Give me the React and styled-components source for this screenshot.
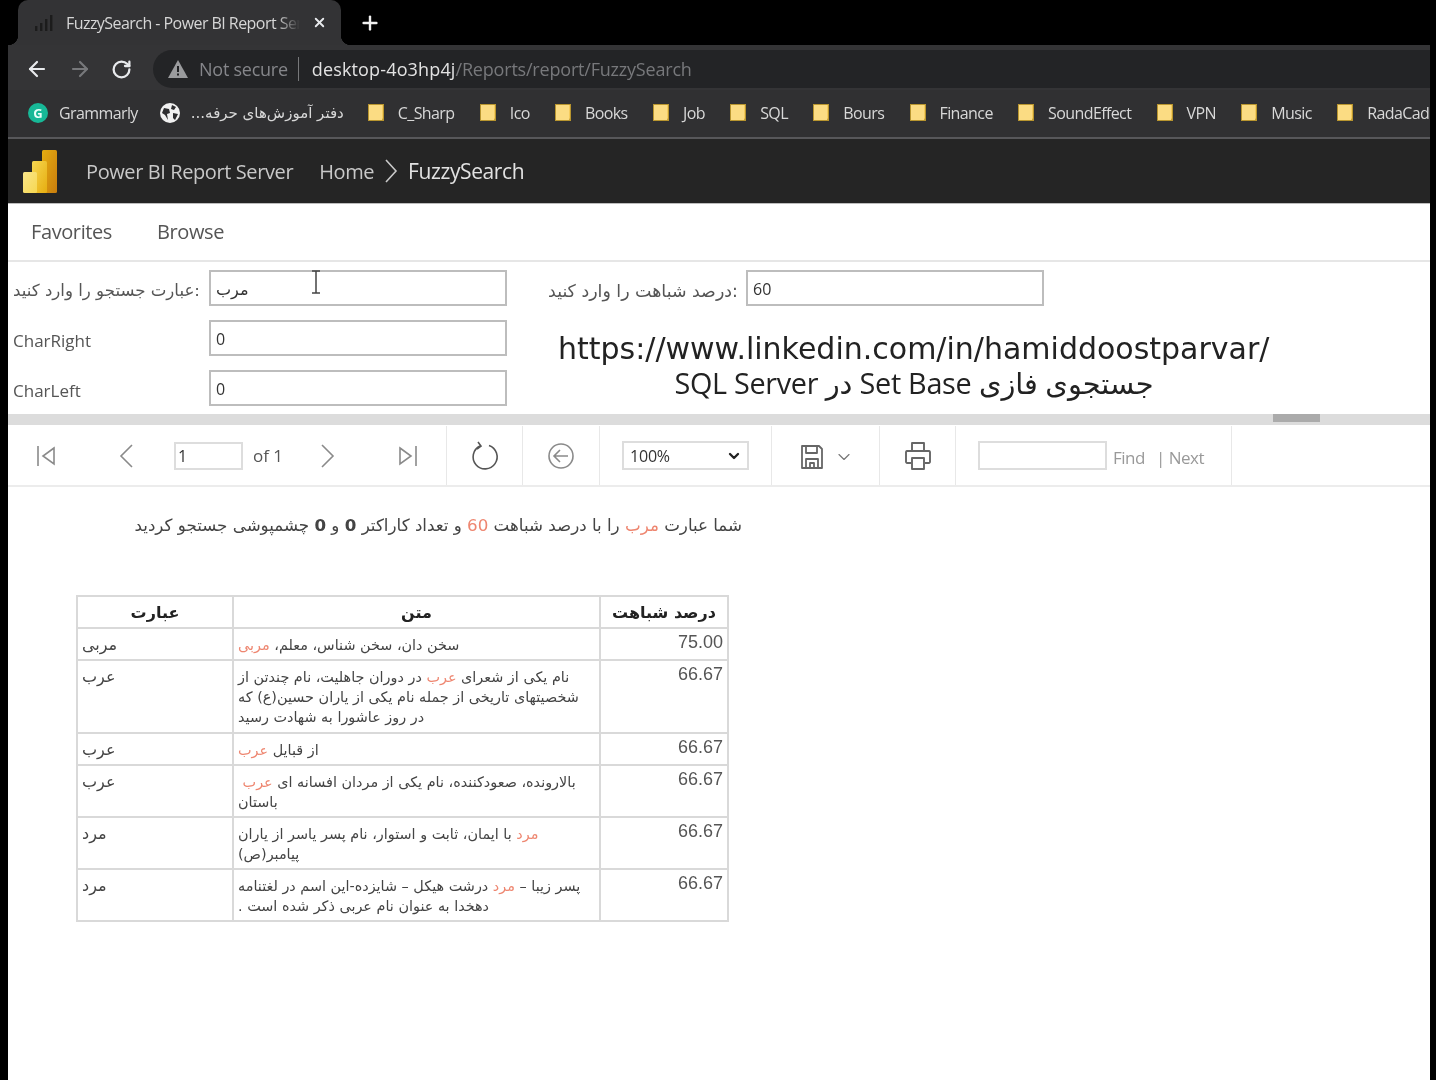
import React from "react";
import styled, { createGlobalStyle } from "styled-components";
import { Plus, X, ArrowLeft, ArrowRight, RotateCw, ChevronDown } from "lucide-react";

const UI_FONT = `"Open Sans", "DejaVu Sans", sans-serif`;
const FA_FONT = `"DejaVu Sans", sans-serif`;

const bookmarks = ["C_Sharp", "Ico", "Books", "Job", "SQL", "Bours", "Finance", "SoundEffect", "VPN", "Music", "RadaCad"];

const rows = [
  { term: "مربی", score: "75.00", h: 32, lines: [["سخن دان، سخن شناس، معلم، ", "مربی"]] },
  {
    term: "عرب",
    score: "66.67",
    h: 73,
    lines: [
      ["نام یکی از شعرای ", "عرب", " در دوران جاهلیت، نام چندتن از"],
      ["شخصیتهای تاریخی از جمله نام یکی از یاران حسین(ع) که"],
      ["در روز عاشورا به شهادت رسید"],
    ],
  },
  { term: "عرب", score: "66.67", h: 32, lines: [["از قبایل ", "عرب"]] },
  {
    term: "عرب",
    score: "66.67",
    h: 52,
    lines: [["بالارونده، صعودکننده، نام یکی از مردان افسانه ای ", "عرب", " "], ["باستان"]],
  },
  {
    term: "مرد",
    score: "66.67",
    h: 52,
    lines: [["", "مرد", " با ایمان، ثابت و استوار، نام پسر یاسر از یاران"], ["پیامبر(ص)"]],
  },
  {
    term: "مرد",
    score: "66.67",
    h: 52,
    lines: [["پسر زیبا – ", "مرد", " درشت هیکل – شایزده-این اسم در لغتنامه"], ["دهخدا به عنوان نام عربی ذکر شده است ."]],
  },
];

const Folder = () => (
  <svg width="17" height="19" viewBox="0 0 17 19">
    <path d="M0 1h16v17H0z" fill="#b8952f" />
    <path d="M1 2h13v15H1z" fill="#fbdc83" />
    <path d="M14 2h1v13l-1 2z" fill="#f5cb5c" />
  </svg>
);

const PowerBiLogo = () => (
  <svg width="35" height="43" viewBox="0 0 35 43">
    <defs>
      <linearGradient id="pbiA" x1="0" y1="0" x2="1" y2="1">
        <stop offset="0" stopColor="#e6ad10" />
        <stop offset="1" stopColor="#c87d0e" />
      </linearGradient>
      <linearGradient id="pbiB" x1="0" y1="0" x2="1" y2="1">
        <stop offset="0" stopColor="#f6d751" />
        <stop offset="1" stopColor="#e6ad10" />
      </linearGradient>
      <linearGradient id="pbiC" x1="0" y1="0" x2="1" y2="1">
        <stop offset="0" stopColor="#f9e589" />
        <stop offset="1" stopColor="#f6d751" />
      </linearGradient>
    </defs>
    <rect x="19" y="0" width="15" height="43" rx="1.5" fill="url(#pbiA)" />
    <rect x="9" y="11" width="15" height="32" rx="1.5" fill="url(#pbiB)" />
    <rect x="0" y="22" width="14" height="21" rx="1.5" fill="url(#pbiC)" />
  </svg>
);

const ToolIcon = ({ w = 24, h = 28, children }) => (
  <svg width={w} height={h} viewBox={`0 0 ${w} ${h}`} fill="none" stroke="#8a8a8a" strokeWidth="1.6">
    {children}
  </svg>
);

export default function App() {
  return (
    <>
      <GlobalStyle />
      <Page>
        <TabStrip>
          <Tab>
            <svg width="20" height="16" viewBox="0 0 20 16">
              <path d="M1 11h2.4v5H1zM6 8h2.4v8H6zM11 4h2.4v12H11zM16 0h2.4v16H16z" fill="#1c1c1c" />
            </svg>
            <TabTitle>FuzzySearch - Power BI Report Server</TabTitle>
            <X size={15} color="#e8eaed" strokeWidth={3} />
          </Tab>
          <NewTab>
            <Plus size={22} color="#f1f1f1" strokeWidth={2.6} />
          </NewTab>
        </TabStrip>

        <Frame>
          <AddressBar>
            <NavButtons>
              <ArrowLeft size={24} color="#e8eaed" strokeWidth={2.2} />
              <ArrowRight size={24} color="#77787b" strokeWidth={2.2} />
              <RotateCw size={21} color="#e8eaed" strokeWidth={2.6} />
            </NavButtons>
            <Omnibox>
              <svg width="20" height="18" viewBox="0 0 20 18">
                <path d="M10 0l10 18H0z" fill="#9a9b9d" />
                <path d="M9 6h2v6H9zM9 13.5h2v2H9z" fill="#1f2022" />
              </svg>
              <NotSecure>Not secure</NotSecure>
              <UrlHost>desktop-4o3hp4j</UrlHost>
              <UrlPath>/Reports/report/FuzzySearch</UrlPath>
            </Omnibox>
          </AddressBar>

          <BookmarkBar>
            <Bookmark $gap={11} $after={22}>
              <Grammarly>G</Grammarly>
              <BookmarkLabel>Grammarly</BookmarkLabel>
            </Bookmark>
            <Bookmark $gap={11} $after={24}>
              <svg width="20" height="20" viewBox="0 0 20 20">
                <circle cx="10" cy="10" r="10" fill="#f1f1f1" />
                <path d="M4 5l5 1 1 4-3 1 1 6-3-5-3-2zM12 2l4 2-2 3-3-1zM13 10l5 1-3 6-2-2z" fill="#2d2d2f" />
              </svg>
              <FaBookmark dir="rtl">دفتر آموزش‌های حرفه...</FaBookmark>
            </Bookmark>
            {bookmarks.map((name) => (
              <Bookmark key={name} $gap={13} $after={25.3}>
                <Folder />
                <BookmarkLabel>{name}</BookmarkLabel>
              </Bookmark>
            ))}
          </BookmarkBar>

          <ServerHeader>
            <PowerBiLogo />
            <ProductName>Power BI Report Server</ProductName>
            <Crumb>Home</Crumb>
            <svg width="16" height="26" viewBox="0 0 16 26" fill="none" stroke="#c9c9c9" strokeWidth="1.6">
              <path d="M3 2l10 11L3 24" />
            </svg>
            <CrumbCurrent>FuzzySearch</CrumbCurrent>
          </ServerHeader>

          <Content>
            <TopNav>
              <TopNavItem>Favorites</TopNavItem>
              <TopNavItem>Browse</TopNavItem>
            </TopNav>

            <Params>
              <ParamGrid>
                <ParamLabel $fa $size={16.6}>عبارت جستجو را وارد کنید:</ParamLabel>
                <ParamBox>
                  <ParamValue dir="rtl">مرب</ParamValue>
                  <TextCursor width="12" height="24" viewBox="0 0 12 24" fill="none" stroke="#444" strokeWidth="1.5">
                    <path d="M2 1h8M6 1v22M2 23h8" />
                  </TextCursor>
                </ParamBox>
                <ParamLabel>CharRight</ParamLabel>
                <ParamBox>
                  <ParamValue>0</ParamValue>
                </ParamBox>
                <ParamLabel>CharLeft</ParamLabel>
                <ParamBox>
                  <ParamValue>0</ParamValue>
                </ParamBox>
              </ParamGrid>
              <ParamSide>
                <SideRow>
                  <ParamLabel $fa $size={17.4}>درصد شباهت را وارد کنید:</ParamLabel>
                  <ParamBox>
                    <ParamValue>60</ParamValue>
                  </ParamBox>
                </SideRow>
                <Caption>
                  <CaptionLink>https://www.linkedin.com/in/hamiddoostparvar/</CaptionLink>
                  <CaptionTitle dir="rtl">جستجوی فازی Set Base در SQL Server</CaptionTitle>
                </Caption>
              </ParamSide>
            </Params>

            <Splitter>
              <SplitterGrip />
            </Splitter>

            <ReportToolbar>
              <ToolGroup $w={439}>
                <IconSlot $w={76}>
                  <ToolIcon>
                    <path d="M4 4v20M20 6L9 14l11 8z" />
                  </ToolIcon>
                </IconSlot>
                <IconSlot $w={84}>
                  <ToolIcon>
                    <path d="M18 3L7 14l11 11" />
                  </ToolIcon>
                </IconSlot>
                <PageInput>1</PageInput>
                <PageCount>of 1</PageCount>
                <IconSlot $w={84}>
                  <ToolIcon>
                    <path d="M6 3l11 11L6 25" />
                  </ToolIcon>
                </IconSlot>
                <IconSlot $w={76}>
                  <ToolIcon>
                    <path d="M20 4v20M4 6l11 8-11 8z" />
                  </ToolIcon>
                </IconSlot>
              </ToolGroup>
              <ToolGroup $w={76} $center>
                <ToolIcon w={30} h={32}>
                  <path d="M10 6a12 12 0 1 0 9-.5M8 2l3 4-4 3" stroke="#555" />
                </ToolIcon>
              </ToolGroup>
              <ToolGroup $w={77} $center>
                <ToolIcon w={28} h={28}>
                  <circle cx="14" cy="14" r="12" />
                  <path d="M21 14H8M13 8l-6 6 6 6" />
                </ToolIcon>
              </ToolGroup>
              <ToolGroup $w={172} $center>
                <ZoomSelect>
                  <span>100%</span>
                  <ChevronDown size={16} color="#222" strokeWidth={3.5} />
                </ZoomSelect>
              </ToolGroup>
              <ToolGroup $w={108} $center>
                <SaveButton>
                  <svg width="24" height="26" viewBox="0 0 24 26" fill="none" stroke="#666" strokeWidth="1.8" strokeLinejoin="round">
                    <path d="M2 2h17l3 3v19H2zM6 2v7h11V2M6 24v-9h12v9M10 24v-5h4v5" />
                  </svg>
                  <ChevronDown size={20} color="#777" strokeWidth={1.4} />
                </SaveButton>
              </ToolGroup>
              <ToolGroup $w={76} $center>
                <svg width="28" height="30" viewBox="0 0 28 30" fill="none" stroke="#666" strokeWidth="1.9" strokeLinejoin="round">
                  <path d="M8 10V2h12v8M7 22H3a1.5 1.5 0 0 1-1-1V11a1.5 1.5 0 0 1 1-1h22a1.5 1.5 0 0 1 1 1v10a1.5 1.5 0 0 1-1 1h-4M8 17h12v11H8z" />
                </svg>
              </ToolGroup>
              <ToolGroup $w={276}>
                <FindInput />
                <FindLink>Find</FindLink>
                <FindLink $sep>| Next</FindLink>
              </ToolGroup>
            </ReportToolbar>

            <ReportBody>
              <Message dir="rtl">
                شما عبارت <Hit>مرب</Hit> را با درصد شباهت <Hit>60</Hit> و تعداد کاراکتر <b>0</b> و <b>0</b> چشمپوشی جستجو کردید
              </Message>
              <ResultTable>
                <colgroup>
                  <col width="156" />
                  <col width="367" />
                  <col width="128" />
                </colgroup>
                <thead>
                  <tr>
                    <HeadCell>عبارت</HeadCell>
                    <HeadCell>متن</HeadCell>
                    <HeadCell>درصد شباهت</HeadCell>
                  </tr>
                </thead>
                <tbody>
                  {rows.map((row, i) => (
                    <BodyRow key={i} $h={row.h}>
                      <TermCell>
                        <Line>{row.term}</Line>
                      </TermCell>
                      <TextCell>
                        {row.lines.map((parts, j) => (
                          <Line key={j}>
                            {parts.map((part, k) => (k === 1 ? <Hit key={k}>{part}</Hit> : part))}
                          </Line>
                        ))}
                      </TextCell>
                      <ScoreCell>{row.score}</ScoreCell>
                    </BodyRow>
                  ))}
                </tbody>
              </ResultTable>
            </ReportBody>
          </Content>
        </Frame>
      </Page>
    </>
  );
}

const GlobalStyle = createGlobalStyle`
  html, body {
    margin: 0;
    padding: 0;
    background: #000;
  }
  * {
    box-sizing: border-box;
  }
`;

const Page = styled.div`
  width: 1436px;
  height: 1080px;
  overflow: hidden;
  background: #000;
  font-family: ${UI_FONT};
  filter: blur(0.4px);
`;

const TabStrip = styled.div`
  height: 45px;
  display: flex;
  align-items: flex-end;
  padding-left: 18px;
`;

const Tab = styled.div`
  position: relative;
  width: 323px;
  height: 45px;
  padding-left: 16px;
  display: flex;
  align-items: center;
  gap: 12px;
  background: #333335;
  border-radius: 10px 10px 0 0;

  &::before,
  &::after {
    content: "";
    position: absolute;
    bottom: 0;
    width: 10px;
    height: 10px;
  }

  &::before {
    left: -10px;
    background: radial-gradient(circle at 0 0, #000 10px, #333335 10.5px);
  }

  &::after {
    right: -10px;
    background: radial-gradient(circle at 100% 0, #000 10px, #333335 10.5px);
  }
`;

const TabTitle = styled.div`
  width: 234px;
  overflow: hidden;
  white-space: nowrap;
  font-size: 16px;
  letter-spacing: -0.55px;
  color: #d6d6d6;
  -webkit-mask-image: linear-gradient(90deg, #000 90%, transparent);
  mask-image: linear-gradient(90deg, #000 90%, transparent);
`;

const NewTab = styled.div`
  height: 45px;
  margin-left: 18px;
  display: flex;
  align-items: center;
`;

const Frame = styled.div`
  width: 1422px;
  height: 1035px;
  margin-left: 8px;
  overflow: hidden;
  background: #fff;
`;

const AddressBar = styled.div`
  height: 45px;
  padding: 5px 0 2px 17px;
  display: flex;
  gap: 12px;
  background: #343436;
`;

const NavButtons = styled.div`
  width: 116px;
  display: flex;
  align-items: center;
  gap: 19px;
`;

const Omnibox = styled.div`
  flex: 1;
  padding-left: 15px;
  display: flex;
  align-items: center;
  background: #232426;
  border-radius: 19px 0 0 19px;
  font-size: 18px;
`;

const NotSecure = styled.span`
  margin-left: 11px;
  padding-right: 10px;
  margin-right: 13px;
  border-right: 1px solid #77787a;
  letter-spacing: -0.25px;
  color: #85868a;
`;

const UrlHost = styled.span`
  letter-spacing: 0.15px;
  color: #e3e3e3;
`;

const UrlPath = styled.span`
  letter-spacing: -0.2px;
  color: #77787b;
`;

const BookmarkBar = styled.div`
  height: 49px;
  padding: 0 0 2px 20px;
  display: flex;
  align-items: center;
  white-space: nowrap;
  background: #303032;
  border-bottom: 2px solid #57575a;
`;

const Bookmark = styled.div`
  display: flex;
  align-items: center;
  gap: ${({ $gap }) => $gap}px;
  margin-right: ${({ $after }) => $after}px;
  flex-shrink: 0;
`;

const Grammarly = styled.div`
  width: 20px;
  height: 20px;
  display: flex;
  align-items: center;
  justify-content: center;
  border-radius: 50%;
  background: #17b897;
  font-size: 13px;
  font-weight: 700;
  color: #e8fff9;
`;

const BookmarkLabel = styled.span`
  font-size: 16px;
  letter-spacing: -0.6px;
  color: #d8d8d8;
`;

const FaBookmark = styled.span`
  font-family: ${FA_FONT};
  font-size: 15px;
  letter-spacing: -0.1px;
  color: #d8d8d8;
`;

const ServerHeader = styled.div`
  height: 65px;
  padding-left: 15px;
  display: flex;
  align-items: center;
  background: #252525;
  border-bottom: 1px solid #bdbdbd;
`;

const ProductName = styled.div`
  margin: 0 26px 0 28px;
  font-size: 20px;
  letter-spacing: -0.4px;
  color: #c8c8c8;
`;

const Crumb = styled.div`
  margin-right: 9px;
  font-size: 20px;
  letter-spacing: -0.4px;
  color: #c8c8c8;
`;

const CrumbCurrent = styled(Crumb)`
  margin: 0 0 0 9px;
  font-size: 21px;
  color: #e2e2e2;
`;

const Content = styled.div`
  background: #fff;
`;

const TopNav = styled.div`
  height: 58px;
  padding: 0 0 2px 23px;
  display: flex;
  align-items: center;
  gap: 45px;
  border-bottom: 2px solid #e6e6e6;
`;

const TopNavItem = styled.div`
  font-size: 20px;
  letter-spacing: -0.4px;
  color: #555;
`;

const Params = styled.div`
  height: 152px;
  padding: 8px 0 0 5px;
  display: flex;
`;

const ParamGrid = styled.div`
  display: grid;
  grid-template-columns: 196px 298px;
  grid-auto-rows: 36px;
  row-gap: 14px;
  align-items: center;
`;

const ParamLabel = styled.div`
  padding-top: 5px;
  font-family: ${({ $fa }) => ($fa ? FA_FONT : UI_FONT)};
  font-size: ${({ $size }) => $size || 17}px;
  color: #555;
  white-space: nowrap;
`;

const ParamBox = styled.div`
  position: relative;
  width: 298px;
  height: 36px;
  padding: 1px 5px 0;
  display: flex;
  align-items: center;
  border: 2px solid #bdbdbd;
  background: #fff;
`;

const ParamValue = styled.div`
  font-size: 16px;
  color: #333;
`;

const TextCursor = styled.svg`
  position: absolute;
  left: 99px;
  top: -2px;
`;

const ParamSide = styled.div`
  margin-left: 41px;
  display: flex;
  flex-direction: column;
`;

const SideRow = styled.div`
  display: grid;
  grid-template-columns: 198px 298px;
  height: 36px;
  align-items: center;
`;

const Caption = styled.div`
  width: 800px;
  margin: 25px 0 0 -31px;
  display: flex;
  flex-direction: column;
  align-items: flex-start;
`;

const CaptionLink = styled.div`
  width: 712px;
  margin-left: 41px;
  font-family: ${FA_FONT};
  font-size: 30px;
  line-height: 36px;
  white-space: nowrap;
  color: #222;
`;

const CaptionTitle = styled.div`
  width: 712px;
  margin-left: 41px;
  text-align: center;
  font-size: 28.8px;
  letter-spacing: -0.3px;
  line-height: 31px;
  white-space: nowrap;
  color: #222;
`;

const Splitter = styled.div`
  height: 11px;
  padding-right: 110px;
  display: flex;
  justify-content: flex-end;
  background: #dcdcdc;
`;

const SplitterGrip = styled.div`
  width: 47px;
  height: 8px;
  background: #ababab;
`;

const ReportToolbar = styled.div`
  height: 62px;
  padding-top: 1px;
  display: flex;
  border-bottom: 2px solid #ececec;
`;

const ToolGroup = styled.div`
  width: ${({ $w }) => $w}px;
  display: flex;
  align-items: center;
  justify-content: ${({ $center }) => ($center ? "center" : "flex-start")};
  border-right: 1px solid #e8e8e8;
`;

const IconSlot = styled.div`
  width: ${({ $w }) => $w}px;
  display: flex;
  justify-content: center;
`;

const PageInput = styled.div`
  width: 69px;
  height: 28px;
  margin-left: 6px;
  padding-left: 2px;
  display: flex;
  align-items: center;
  border: 2px solid #ddd;
  font-size: 16px;
  color: #333;
`;

const PageCount = styled.div`
  width: 43px;
  padding-left: 10px;
  font-size: 17px;
  color: #555;
  white-space: nowrap;
`;

const ZoomSelect = styled.div`
  width: 127px;
  height: 29px;
  padding: 1px 5px 0 6px;
  display: flex;
  align-items: center;
  justify-content: space-between;
  border: 2px solid #ddd;
  font-size: 16px;
  letter-spacing: -0.2px;
  color: #333;
`;

const SaveButton = styled.div`
  display: flex;
  align-items: center;
  gap: 10px;
  padding: 3px 0 0 2px;
`;

const FindInput = styled.div`
  width: 129px;
  height: 29px;
  margin-left: 22px;
  border: 2px solid #ddd;
`;

const FindLink = styled.div`
  margin-left: ${({ $sep }) => ($sep ? 11 : 6)}px;
  padding-top: 3px;
  font-size: 17px;
  letter-spacing: -0.5px;
  color: #999;
`;

const ReportBody = styled.div`
  padding: 27px 0 0 68px;
`;

const Message = styled.div`
  width: 666px;
  font-family: ${FA_FONT};
  font-size: 16.7px;
  line-height: 22px;
  white-space: nowrap;
  color: #444;
`;

const Hit = styled.span`
  color: #ee8670;
`;

const ResultTable = styled.table`
  width: 651px;
  margin-top: 59px;
  table-layout: fixed;
  border-collapse: collapse;
  font-family: ${FA_FONT};
  color: #444;
`;

const HeadCell = styled.th`
  height: 32px;
  padding: 0;
  border: 2px solid #d9d9d9;
  font-size: 16px;
  color: #222;
`;

const BodyRow = styled.tr`
  height: ${({ $h }) => $h}px;
`;

const TermCell = styled.td`
  padding: 6px 4px 0;
  vertical-align: top;
  border: 2px solid #d9d9d9;
  font-size: 16px;
`;

const TextCell = styled.td`
  padding: 6px 4px 0;
  vertical-align: top;
  border: 2px solid #d9d9d9;
  font-size: 14.4px;
`;

const Line = styled.div`
  width: fit-content;
  direction: rtl;
  line-height: 20px;
  white-space: pre;
`;

const ScoreCell = styled.td`
  padding: 3px 4px 0 0;
  vertical-align: top;
  text-align: right;
  border: 2px solid #d9d9d9;
  font-family: "Liberation Sans", sans-serif;
  font-size: 18px;
  color: #555;
`;
